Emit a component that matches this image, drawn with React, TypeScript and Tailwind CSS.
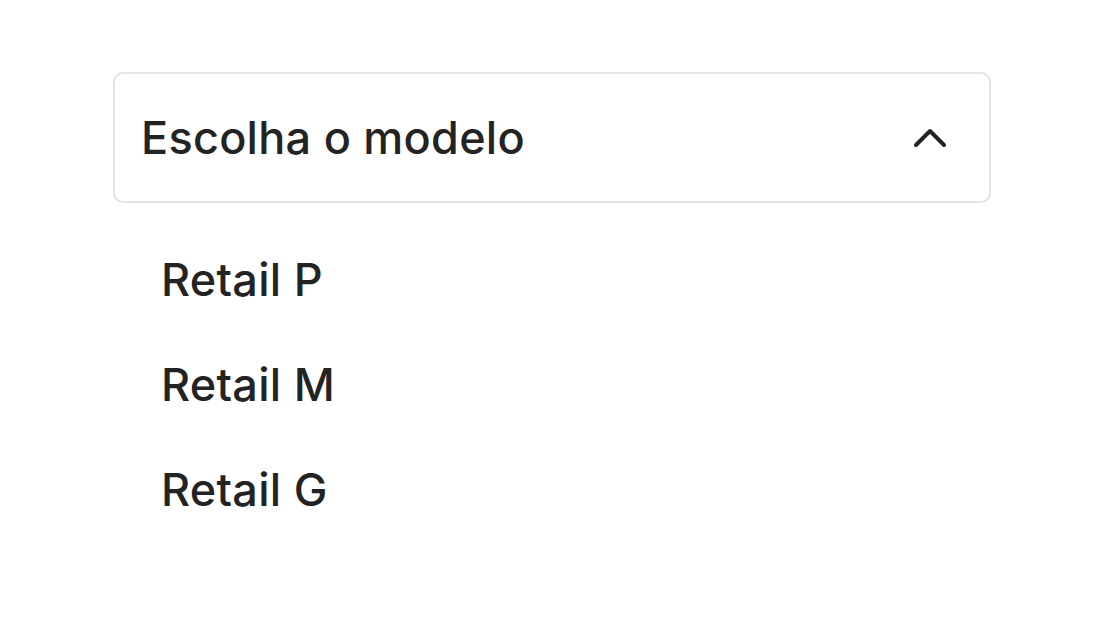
import { useState } from "react";

const models = ["Retail P", "Retail M", "Retail G"];

export default function App() {
  const [open, setOpen] = useState(true);

  return (
    <div className="min-h-screen bg-white pl-[113px] pt-[72px] font-['Inter',sans-serif] text-[#232323]">
      <button
        type="button"
        onClick={() => setOpen(!open)}
        className="flex h-[131px] w-[878px] items-center justify-between rounded-[10px] border-2 border-[#e4e4e4] bg-white pl-[26px] pr-[41px] text-left"
      >
        <span className="text-[45px] font-medium leading-none tracking-[0.006em]">Escolha o modelo</span>
        <svg width="36" height="22" viewBox="0 0 36 22" fill="none" className={open ? "" : "rotate-180"}>
          <polyline
            points="4,18 18,4 32,18"
            stroke="#232323"
            strokeWidth="4"
            strokeLinecap="round"
            strokeLinejoin="round"
          />
        </svg>
      </button>

      {open && (
        <ul className="mt-[24px] pl-[48px]">
          {models.map((m) => (
            <li key={m} className="text-[45px] font-medium leading-[105px] tracking-[0.006em]">
              {m}
            </li>
          ))}
        </ul>
      )}
    </div>
  );
}
